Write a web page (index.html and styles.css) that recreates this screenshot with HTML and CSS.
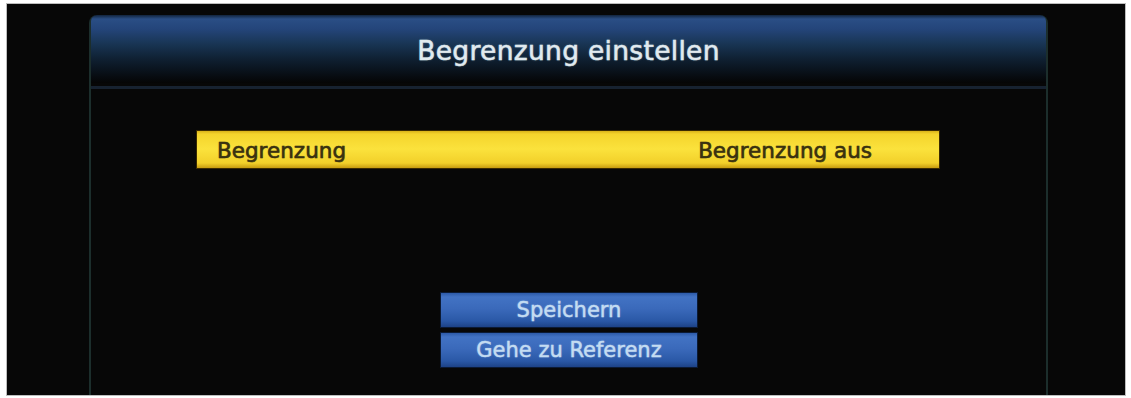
FILE: index.html
```html
<!DOCTYPE html>
<html lang="de">
<head>
<meta charset="utf-8">
<title>Begrenzung einstellen</title>
<link rel="stylesheet" href="styles.css">
</head>
<body>
<div class="screen">
  <div class="panel">
    <div class="header"><span class="title">Begrenzung einstellen</span></div>
    <div class="divider"></div>
    <div class="content">
      <div class="row selected">
        <span class="label">Begrenzung</span>
        <span class="value">Begrenzung aus</span>
      </div>
      <div class="buttons">
        <div class="btn">Speichern</div>
        <div class="btn">Gehe zu Referenz</div>
      </div>
    </div>
  </div>
</div>
</body>
</html>
```
FILE: styles.css
```css
html, body {
  margin: 0;
  padding: 0;
  background: #ffffff;
}
body {
  font-family: "DejaVu Sans", "Liberation Sans", sans-serif;
}
.screen {
  margin: 4px 6px 3px 7px;
  height: 391px;
  background: #070707;
  box-shadow: 0 0 0 1px #bdbdbd;
  padding-top: 11px;
  box-sizing: border-box;
  overflow: hidden;
}
.panel {
  margin-left: 82px;
  width: 959px;
  height: 380px;
  box-sizing: border-box;
  border-left: 2px solid #1c2e2c;
  border-right: 2px solid #1c2e2c;
  border-radius: 8px 8px 0 0;
  display: flex;
  flex-direction: column;
}
.header {
  height: 68px;
  border-radius: 6px 6px 0 0;
  background: linear-gradient(to bottom, #12243c 0px, #2a4e85 4px, #24457a 14px, #193656 28px, #0f2032 44px, #070b10 62px, #050505 68px);
  display: flex;
  justify-content: center;
  align-items: flex-start;
}
.title {
  color: #e2ebf0;
  font-size: 26.5px;
  margin-top: 21px;
  line-height: 30px;
  letter-spacing: 0.3px;
  -webkit-text-stroke: 0.5px #dfe8ee;
  text-shadow: 0 0 2px rgba(200, 220, 235, 0.5);
}
.divider {
  height: 3px;
  margin-top: 3px;
  background: #172230;
}
.content {
  flex: 1;
  display: flex;
  flex-direction: column;
  padding-top: 42px;
}
.row {
  margin-left: 106px;
  width: 742px;
  height: 37px;
  box-sizing: border-box;
  display: flex;
  justify-content: space-between;
  align-items: center;
  padding: 0 67px 0 20px;
  font-size: 21.5px;
}
.row.selected {
  background: linear-gradient(to bottom, #d9b21a 0px, #f4d42c 3px, #fbe23c 18px, #f2d02a 32px, #c79c10 37px);
  box-shadow: 0 0 0 1px #3a2a00;
  color: #3a3210;
}
.label, .value {
  -webkit-text-stroke: 0.5px #3a3210;
  text-shadow: 0 0 1px rgba(60, 50, 10, 0.6);
  padding-top: 1px;
}
.buttons {
  margin-top: 125px;
  margin-left: 350px;
  width: 256px;
  display: flex;
  flex-direction: column;
  gap: 6px;
}
.btn {
  height: 34px;
  box-sizing: border-box;
  background: linear-gradient(to bottom, #2c5aa8 0px, #4273c4 4px, #3a69ba 16px, #2a58a6 28px, #1d4286 34px);
  box-shadow: 0 0 0 1px #0b1a34;
  color: #c4dcf2;
  font-size: 21px;
  display: flex;
  justify-content: center;
  align-items: center;
  -webkit-text-stroke: 0.4px #c4dcf2;
  text-shadow: 0 0 2px rgba(190, 220, 245, 0.5);
}
```
